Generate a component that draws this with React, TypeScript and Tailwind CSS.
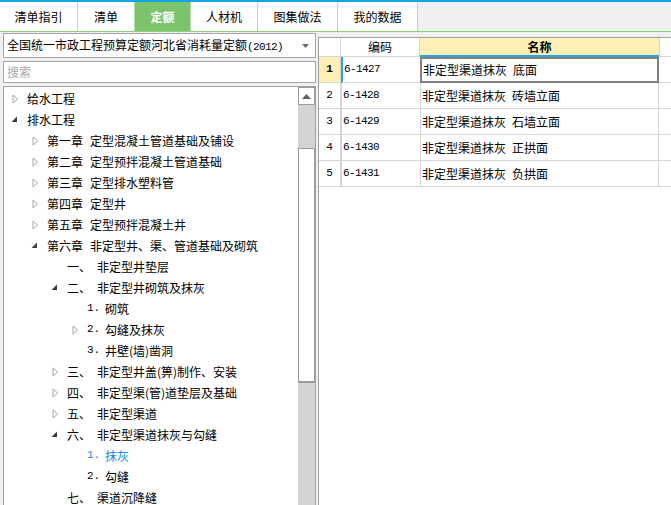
import React from 'react';

type Arrow = 'none' | 'closed' | 'open';

interface TreeItem {
  level: number;
  arrow: Arrow;
  prefix?: string;
  name: string;
  active?: boolean;
}

const tabs = ['清单指引', '清单', '定额', '人材机', '图集做法', '我的数据'];
const tabWidths = ['w-[78px]', 'w-[57px]', 'w-[56px]', 'w-[67px]', 'w-[80px]', 'w-[80px]'];

const tree: TreeItem[] = [
  { level: 0, arrow: 'closed', name: '给水工程' },
  { level: 0, arrow: 'open', name: '排水工程' },
  { level: 1, arrow: 'closed', prefix: '第一章', name: '定型混凝土管道基础及铺设' },
  { level: 1, arrow: 'closed', prefix: '第二章', name: '定型预拌混凝土管道基础' },
  { level: 1, arrow: 'closed', prefix: '第三章', name: '定型排水塑料管' },
  { level: 1, arrow: 'closed', prefix: '第四章', name: '定型井' },
  { level: 1, arrow: 'closed', prefix: '第五章', name: '定型预拌混凝土井' },
  { level: 1, arrow: 'open', prefix: '第六章', name: '非定型井、渠、管道基础及砌筑' },
  { level: 2, arrow: 'none', prefix: '一、', name: '非定型井垫层' },
  { level: 2, arrow: 'open', prefix: '二、', name: '非定型井砌筑及抹灰' },
  { level: 3, arrow: 'none', prefix: '1.', name: '砌筑' },
  { level: 3, arrow: 'closed', prefix: '2.', name: '勾缝及抹灰' },
  { level: 3, arrow: 'none', prefix: '3.', name: '井壁(墙)凿洞' },
  { level: 2, arrow: 'closed', prefix: '三、', name: '非定型井盖(箅)制作、安装' },
  { level: 2, arrow: 'closed', prefix: '四、', name: '非定型渠(管)道垫层及基础' },
  { level: 2, arrow: 'closed', prefix: '五、', name: '非定型渠道' },
  { level: 2, arrow: 'open', prefix: '六、', name: '非定型渠道抹灰与勾缝' },
  { level: 3, arrow: 'none', prefix: '1.', name: '抹灰', active: true },
  { level: 3, arrow: 'none', prefix: '2.', name: '勾缝' },
  { level: 2, arrow: 'none', prefix: '七、', name: '渠道沉降缝' },
];

const levelPad = ['pl-[6px]', 'pl-[26px]', 'pl-[46px]', 'pl-[66px]'];

const rows = [
  { no: '1', code: '6-1427', name: '非定型渠道抹灰', part: '底面' },
  { no: '2', code: '6-1428', name: '非定型渠道抹灰', part: '砖墙立面' },
  { no: '3', code: '6-1429', name: '非定型渠道抹灰', part: '石墙立面' },
  { no: '4', code: '6-1430', name: '非定型渠道抹灰', part: '正拱面' },
  { no: '5', code: '6-1431', name: '非定型渠道抹灰', part: '负拱面' },
];

const cjk = "font-['Noto_Sans_CJK_SC',sans-serif]";
const mono = "font-['Liberation_Mono','DejaVu_Sans_Mono',monospace]";

function TreeArrow({ kind }: { kind: Arrow }) {
  if (kind === 'closed') {
    return (
      <svg width="7" height="10" viewBox="0 0 7 10" className="ml-[2px]">
        <path d="M1 1 L5.5 5 L1 9 Z" fill="none" stroke="#a6a6a6" strokeWidth="1" />
      </svg>
    );
  }
  if (kind === 'open') {
    return (
      <svg width="7" height="7" viewBox="0 0 7 7" className="ml-[1px]">
        <path d="M6 0.5 L6 6 L0.5 6 Z" fill="#3c3c3c" />
      </svg>
    );
  }
  return null;
}

export default function App() {
  return (
    <div className={`w-[671px] h-[505px] overflow-hidden bg-[#f0f0f0] text-[12px] text-black ${cjk} flex flex-col`}>
      {/* 顶部蓝线 */}
      <div className="h-[2px] bg-[#14a3e4] shrink-0" />

      {/* 页签 */}
      <div className="h-[30px] shrink-0 flex border-b border-[#8ccf7b]">
        {tabs.map((t, i) => (
          <div
            key={t}
            className={`${tabWidths[i]} h-full flex items-center justify-center border-r border-[#b3e0a6] ${
              i === 2 ? 'bg-[#7dc36b] text-white font-bold' : 'bg-white'
            }`}
          >
            {t}
          </div>
        ))}
      </div>

      <div className="flex-1 flex min-h-0">
        {/* 左侧 */}
        <div className="w-[318px] shrink-0 pl-[3px] pr-[2px] pt-[1px] flex flex-col">
          <div className="h-[25px] shrink-0 bg-white border border-[#a5a5a5] flex items-center pl-[3px] pr-[6px]">
            <span className="flex-1 leading-none whitespace-nowrap">
              全国统一市政工程预算定额河北省消耗量定额<span className={`${mono} text-[11px] tracking-[-0.6px]`}>(2012)</span>
            </span>
            <svg width="7" height="4" viewBox="0 0 7 4">
              <path d="M0 0 L7 0 L3.5 4 Z" fill="#6e6e6e" />
            </svg>
          </div>
          <div className="h-[22px] mt-[3px] shrink-0 bg-white border border-[#a5a5a5] flex items-center pl-[3px] text-[#a9a9a9]">
            搜索
          </div>
          <div className="flex-1 mt-[3px] bg-white border border-[#a0a0a0] border-b-0 flex min-h-0">
            <div className="flex-1 pt-[1px] overflow-hidden">
              {tree.map((it, i) => (
                <div key={i} className={`h-[21px] flex items-center whitespace-nowrap ${levelPad[it.level]}`}>
                  <span className="w-[17px] shrink-0 flex items-center">
                    <TreeArrow kind={it.arrow} />
                  </span>
                  <span className={`flex items-center leading-none ${it.active ? 'text-[#1788e8]' : ''}`}>
                    {it.prefix && (
                      <span
                        className={
                          it.level === 3
                            ? `${mono} text-[11px] w-[18px]`
                            : it.level === 2
                            ? 'w-[30px]'
                            : 'mr-[7px]'
                        }
                      >
                        {it.prefix}
                      </span>
                    )}
                    <span>{it.name}</span>
                  </span>
                </div>
              ))}
            </div>
            {/* 滚动条 */}
            <div className="w-[17px] shrink-0 bg-[#d4d4d4] flex flex-col">
              <div className="h-[18px] shrink-0 bg-white border border-[#9c9c9c] flex items-center justify-center">
                <svg width="9" height="5" viewBox="0 0 9 5">
                  <path d="M0 5 L4.5 0 L9 5 Z" fill="#5f5f5f" />
                </svg>
              </div>
              <div className="h-[43px] shrink-0" />
              <div className="h-[235px] shrink-0 bg-white border border-[#9c9c9c] border-b-2" />
            </div>
          </div>
        </div>

        {/* 右侧表格 */}
        <div className="flex-1 mt-[5px] bg-white border-l border-t border-[#a0a0a0] flex flex-col">
          <div className="h-[19px] shrink-0 flex">
            <div className="w-[22px] border-r border-b border-[#d6d6d6]" />
            <div className="w-[79px] border-r border-b border-[#d6d6d6] flex items-center justify-center leading-none">
              编码
            </div>
            <div className="w-[239px] bg-[#fdefb6] border-b-2 border-[#28a3dc] flex items-center justify-center font-bold leading-none">
              名称
            </div>
            <div className="flex-1 border-l border-b border-[#d6d6d6]" />
          </div>
          {rows.map((r, i) => (
            <div key={r.no} className="h-[26px] shrink-0 flex">
              <div
                className={`w-[22px] border-r border-b border-[#d6d6d6] flex items-center justify-center ${mono} text-[11px] ${
                  i === 0 ? 'bg-[#fdefb6] font-bold' : ''
                }`}
              >
                {r.no}
              </div>
              <div
                className={`w-[79px] border-b border-[#d6d6d6] flex items-center pl-[1px] ${mono} text-[11px] tracking-[-0.6px] ${
                  i === 0 ? 'border-l-2 border-l-[#28a3dc]' : 'border-l border-l-[#d6d6d6]'
                }`}
              >
                {r.code}
              </div>
              <div
                className={`w-[239px] flex items-center pl-[1px] leading-none ${
                  i === 0 ? 'border-2 border-[#808080]' : 'border-l border-r border-b border-[#d6d6d6]'
                }`}
              >
                <span>{r.name}</span>
                <span className="ml-[6px]">{r.part}</span>
              </div>
              <div className="flex-1 border-b border-[#d6d6d6]" />
            </div>
          ))}
        </div>
      </div>
    </div>
  );
}
